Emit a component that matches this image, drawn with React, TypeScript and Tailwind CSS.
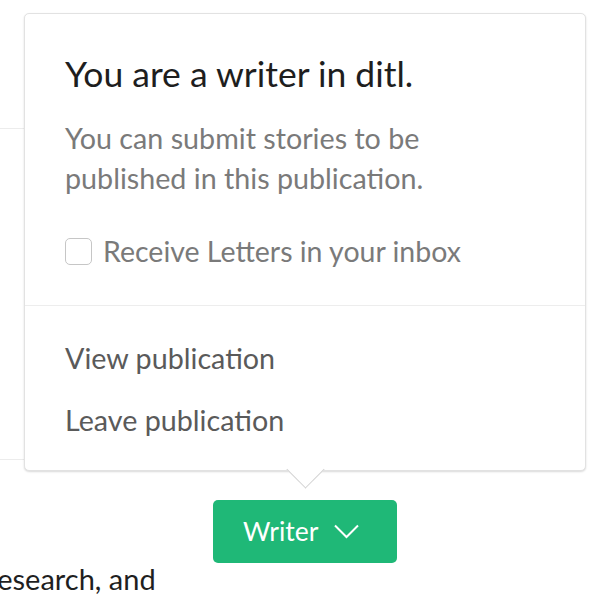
import { useState } from 'react';

export default function App() {
  const [letters, setLetters] = useState(false);

  return (
    <div className="relative w-[602px] h-[594px] overflow-hidden bg-white font-['Lato','Liberation_Sans',sans-serif]">
      {/* Page content underneath the popover */}
      <div className="flex flex-col">
        <div className="h-[128px]" />
        <div className="w-[300px] border-t border-[#ececec]" />
        <div className="h-[330px]" />
        <div className="w-[300px] border-t border-[#ececec]" />
        <div className="h-[40px]" />
        <div className="flex pl-[213px]">
          <button className="flex h-[63px] w-[184px] items-center justify-start gap-[16px] rounded-[5px] bg-[#1fb877] pl-[30px] text-[26.5px] text-white">
            <span>Writer</span>
            <svg width="25" height="15" viewBox="0 0 25 15" fill="none" stroke="white" strokeWidth="2">
              <path d="M1 1.5 L12.5 13 L24 1.5" />
            </svg>
          </button>
        </div>
        <p className="-ml-[20px] mt-[1px] text-[29px] leading-[30px] text-[#1f1f1f]">Research, and</p>
      </div>

      {/* Popover */}
      <div className="absolute left-[24px] top-[13px] w-[562px] rounded-[5px] border border-[#e2e2e2] bg-white shadow-[0_1px_2px_rgba(0,0,0,0.15)]">
        <div className="px-[40px] pt-[40px] pb-[36px]">
          <h2 className="text-[35.5px] leading-[40px] text-[#1e1e1e]">You are a writer in ditl.</h2>
          <p className="mt-[24px] text-[28.7px] leading-[40px] text-[#7a7a7a]">
            You can submit stories to be
            <br />
            published in this publication.
          </p>
          <label className="mt-[35px] flex items-center gap-[11px] text-[28.5px] leading-[36px] text-[#7a7a7a]">
            <input
              type="checkbox"
              checked={letters}
              onChange={(e) => setLetters(e.target.checked)}
              className="h-[27px] w-[27px] appearance-none rounded-[5px] border border-[#c6c6c6] bg-white"
            />
            <span>Receive Letters in your inbox</span>
          </label>
        </div>
        <div className="border-t border-[#ededed]" />
        <ul className="flex flex-col gap-[22px] px-[40px] pt-[32px] pb-[30px] text-[28.7px] leading-[40px] text-[#5a5a5a]">
          <li>View publication</li>
          <li>Leave publication</li>
        </ul>

        {/* Arrow */}
        <div className="absolute left-[267px] top-[100%] -mt-[14px] h-[27px] w-[27px] rotate-45 border-b border-r border-[#d2d2d2] bg-white" />
      </div>
    </div>
  );
}
